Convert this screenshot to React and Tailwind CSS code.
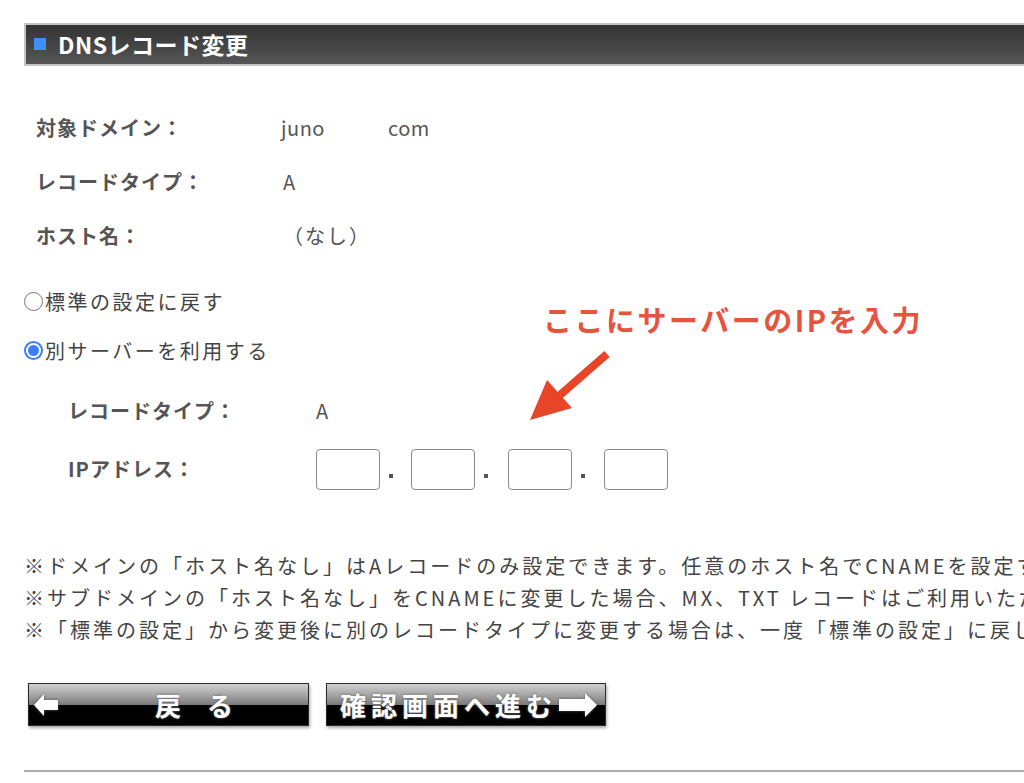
import React from "react";

const FONT = "[font-family:'Noto_Sans_CJK_JP','Noto_Sans',sans-serif]";

function Row({ label, children, inner }) {
  return (
    <div className={`flex items-center ${inner ? "h-[58px] pl-[44px]" : "h-[54px] pl-[12px]"}`}>
      <div className={`${inner ? "w-[248px]" : "w-[245px]"} text-[20px] font-bold tracking-[1px] text-[#555] leading-none`}>
        {label}
      </div>
      <div className="text-[20px] text-[#555] leading-none">{children}</div>
    </div>
  );
}

function Radio({ checked, children }) {
  return (
    <div className="flex items-center h-[49px]">
      {checked ? (
        <span className="w-[19px] h-[19px] rounded-full border-[2px] border-[#3d7ff2] flex items-center justify-center mr-[2px]">
          <span className="w-[11px] h-[11px] rounded-full bg-[#3d7ff2]" />
        </span>
      ) : (
        <span className="w-[19px] h-[19px] rounded-full border-[1.5px] border-[#777] mr-[2px]" />
      )}
      <span className="text-[20px] tracking-[2.5px] text-[#444] leading-none">{children}</span>
    </div>
  );
}

function IpBox() {
  return <div className="w-[64px] h-[41px] border-[1.5px] border-[#8a8a8a] rounded-[4px] bg-white" />;
}

function IpDot({ w }) {
  return (
    <div className={`${w} flex justify-start pl-[9px]`}>
      <span className="w-[4px] h-[4px] bg-[#555] mt-[14px]" />
    </div>
  );
}

function ArrowLeft() {
  return (
    <svg width="26" height="24" viewBox="0 0 26 24" className="[filter:drop-shadow(0_0_1.5px_#555)]">
      <polygon points="1,12 11,1 11,7 25,7 25,17 11,17 11,23" fill="#fff" />
    </svg>
  );
}

function ArrowRight() {
  return (
    <svg width="40" height="26" viewBox="0 0 40 26" className="[filter:drop-shadow(0_0_1.5px_#555)]">
      <polygon points="39,13 27,1 27,7 1,7 1,19 27,19 27,25" fill="#fff" />
    </svg>
  );
}

function GlossButton({ children, width }) {
  return (
    <div
      className={`${width} h-[43px] border border-[#2a2a2a] relative overflow-hidden shadow-[1px_2px_3px_rgba(0,0,0,0.35)] bg-black`}
    >
      <div className="absolute inset-x-0 top-0 h-[21px] bg-gradient-to-b from-[#d0d0d0] via-[#a8a8a8] to-[#7a7a7a]" />
      <div className="relative h-full flex items-center">{children}</div>
    </div>
  );
}

export default function App() {
  return (
    <div className={`w-[1024px] h-[783px] bg-white overflow-hidden relative ${FONT}`}>
      <div className="pt-[23px]">
        {/* Header bar */}
        <div className="ml-[24px] w-[1100px] h-[43px] border-y-[2px] border-l-[2px] border-[#c4c4c4] bg-gradient-to-b from-[#333333] to-[#565656] flex items-center">
          <span className="w-[12px] h-[12px] bg-[#3f8ff5] ml-[8px] mb-[2px]" />
          <span className="ml-[12px] text-white font-bold text-[23px] tracking-[0.5px] leading-none">
            DNSレコード変更
          </span>
        </div>

        <div className="pl-[24px]">
          <div className="mt-[35px]">
            <Row label="対象ドメイン：">
              <span className="tracking-[0.5px]">juno</span>
              <span className="ml-[63px] tracking-[0.5px]">com</span>
            </Row>
            <Row label="レコードタイプ：">
              <span className="ml-[2px]">A</span>
            </Row>
            <Row label="ホスト名：">
              <span className="ml-[2px] tracking-[2px]">（なし）</span>
            </Row>
          </div>

          <div className="mt-[14px]">
            <Radio>標準の設定に戻す</Radio>
            <Radio checked>別サーバーを利用する</Radio>
          </div>

          <div className="mt-[7px]">
            <Row inner label="レコードタイプ：">
              <span>A</span>
            </Row>
            <div className="flex items-center h-[58px] pl-[44px]">
              <div className="w-[248px] text-[20px] font-bold tracking-[1px] text-[#555] leading-none">
                IPアドレス：
              </div>
              <div className="flex items-center">
                <IpBox />
                <IpDot w="w-[31px]" />
                <IpBox />
                <IpDot w="w-[33px]" />
                <IpBox />
                <IpDot w="w-[32px]" />
                <IpBox />
              </div>
            </div>
          </div>

          <div className="mt-[52px] text-[20px] tracking-[3px] text-[#444] whitespace-nowrap">
            <div className="h-[32px] flex items-center">
              ※ドメインの「ホスト名なし」はAレコードのみ設定できます。任意のホスト名でCNAMEを設定することができます。
            </div>
            <div className="h-[32px] flex items-center">
              ※サブドメインの「ホスト名なし」をCNAMEに変更した場合、MX、TXT レコードはご利用いただけません。
            </div>
            <div className="h-[32px] flex items-center">
              ※「標準の設定」から変更後に別のレコードタイプに変更する場合は、一度「標準の設定」に戻してください。
            </div>
          </div>

          <div className="mt-[37px] ml-[4px] flex gap-[17px]">
            <GlossButton width="w-[281px]">
              <span className="ml-[4px] flex">
                <ArrowLeft />
              </span>
              <span className="ml-[96px] text-white font-bold text-[26px] leading-none tracking-[26px] [text-shadow:0_0_3px_#666,0_0_1px_#888]">
                戻る
              </span>
            </GlossButton>
            <GlossButton width="w-[280px]">
              <span className="ml-[13px] text-white font-bold text-[26px] leading-none tracking-[5px] [text-shadow:0_0_3px_#666,0_0_1px_#888]">
                確認画面へ進む
              </span>
              <span className="ml-[1px] flex">
                <ArrowRight />
              </span>
            </GlossButton>
          </div>

          <div className="mt-[44px] h-[2px] bg-[#ababab] w-[1000px]" />
        </div>
      </div>

      {/* Annotation */}
      <div className="absolute left-[543px] top-[305px] text-[29px] font-bold tracking-[2.5px] text-[#e6533e] leading-none whitespace-nowrap">
        ここにサーバーのIPを入力
      </div>
      <svg className="absolute left-[520px] top-[345px]" width="95" height="80" viewBox="0 0 95 80">
        <line x1="87" y1="9" x2="40" y2="50" stroke="#e84427" strokeWidth="8" />
        <polygon points="10,75 27,35 52,63" fill="#e84427" />
      </svg>
    </div>
  );
}
